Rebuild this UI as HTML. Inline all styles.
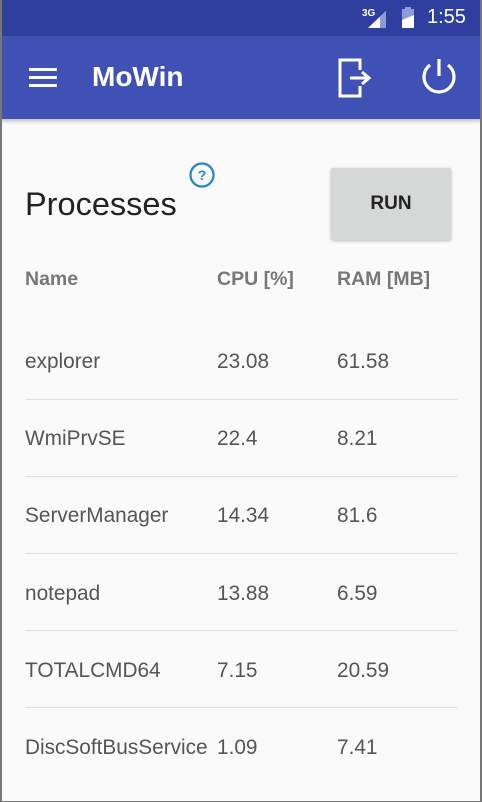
<!DOCTYPE html>
<html><head><style>
*{margin:0;padding:0;box-sizing:border-box}
body{width:482px;height:802px;overflow:hidden;background:#fafafa;font-family:"Liberation Sans",Roboto,sans-serif;position:relative}
.frame{position:absolute;left:0;top:0;width:482px;height:802px;border-left:2px solid #777;border-right:2px solid #777;border-bottom:1px solid #777;pointer-events:none}
.sb{position:absolute;left:0;top:0;width:482px;height:36px;background:#303f9f}
.ab{position:absolute;left:0;top:36px;width:482px;height:83px;background:#3f51b5;box-shadow:0 2px 4px rgba(0,0,0,.25)}
.t{position:absolute;white-space:nowrap}
.row{position:absolute;left:25px;font-size:20.8px;color:#555;white-space:nowrap}
.hd{position:absolute;top:268px;font-size:19.5px;font-weight:bold;color:#777;white-space:nowrap}
.dv{position:absolute;left:25px;width:432px;height:1px;background:#ddd}
</style></head><body>
<div class="sb"></div>
<svg style="position:absolute;left:362px;top:6px" width="28" height="24"><text x="0" y="10" font-size="10" font-weight="bold" fill="#fff" font-family="Liberation Sans">3G</text><polygon points="6,22 24,22 24,5" fill="#fff"/><polygon points="18,22 24,22 24,5 18,11" fill="#8e9bd6"/></svg>
<svg style="position:absolute;left:400px;top:6px" width="16" height="24"><rect x="2" y="3" width="12" height="19" fill="#8e9bd6"/><rect x="5" y="1" width="6" height="3" fill="#8e9bd6"/><polygon points="2,14 14,9 14,22 2,22" fill="#fff"/></svg>
<div class="t" style="left:427px;top:6px;font-size:20px;color:#fff">1:55</div>
<div class="ab"></div>
<div style="position:absolute;left:29px;top:68px;width:28px;height:3px;background:#fff;box-shadow:0 8px 0 #fff,0 16px 0 #fff"></div>
<div class="t" style="left:92px;top:61px;font-size:28px;font-weight:bold;color:#fff">MoWin</div>
<svg style="position:absolute;left:336px;top:56px" width="40" height="44" fill="none" stroke="#fff" stroke-width="3"><path d="M24 14V4H4v36h20V30"/><path d="M14 22h18M26 16l7 6-7 6" /></svg>
<svg style="position:absolute;left:418px;top:56px" width="42" height="42" fill="none" stroke="#fff" stroke-width="3.2"><path d="M21 3v17"/><path d="M12 9a15 15 0 1 0 18 0"/></svg>
<div class="t" style="left:25px;top:186px;font-size:32.5px;color:#222">Processes</div>
<svg style="position:absolute;left:188px;top:161px" width="28" height="28"><circle cx="14" cy="14" r="11.5" fill="none" stroke="#2a86c7" stroke-width="2.3"/><text x="14" y="19" text-anchor="middle" font-size="14" font-weight="bold" fill="#2a86c7" font-family="Liberation Sans">?</text></svg>
<div style="position:absolute;left:331px;top:168px;width:120px;height:72px;background:#d6d7d7;border-radius:2px;box-shadow:0 1px 3px rgba(0,0,0,.25);text-align:center;line-height:72px;font-size:19px;font-weight:bold;color:#222">RUN</div>
<div class="hd" style="left:25px">Name</div>
<div class="hd" style="left:217px">CPU [%]</div>
<div class="hd" style="left:337px">RAM [MB]</div>

<div class="row" style="top:350px">explorer</div><div class="row" style="left:217px;top:350px">23.08</div><div class="row" style="left:337px;top:350px">61.58</div>
<div class="dv" style="top:399px"></div>
<div class="row" style="top:427px">WmiPrvSE</div><div class="row" style="left:217px;top:427px">22.4</div><div class="row" style="left:337px;top:427px">8.21</div>
<div class="dv" style="top:476px"></div>
<div class="row" style="top:504px">ServerManager</div><div class="row" style="left:217px;top:504px">14.34</div><div class="row" style="left:337px;top:504px">81.6</div>
<div class="dv" style="top:553px"></div>
<div class="row" style="top:582px">notepad</div><div class="row" style="left:217px;top:582px">13.88</div><div class="row" style="left:337px;top:582px">6.59</div>
<div class="dv" style="top:630px"></div>
<div class="row" style="top:659px">TOTALCMD64</div><div class="row" style="left:217px;top:659px">7.15</div><div class="row" style="left:337px;top:659px">20.59</div>
<div class="dv" style="top:707px"></div>
<div class="row" style="top:736px">DiscSoftBusService</div><div class="row" style="left:217px;top:736px">1.09</div><div class="row" style="left:337px;top:736px">7.41</div>
<div class="frame"></div>
</body></html>
